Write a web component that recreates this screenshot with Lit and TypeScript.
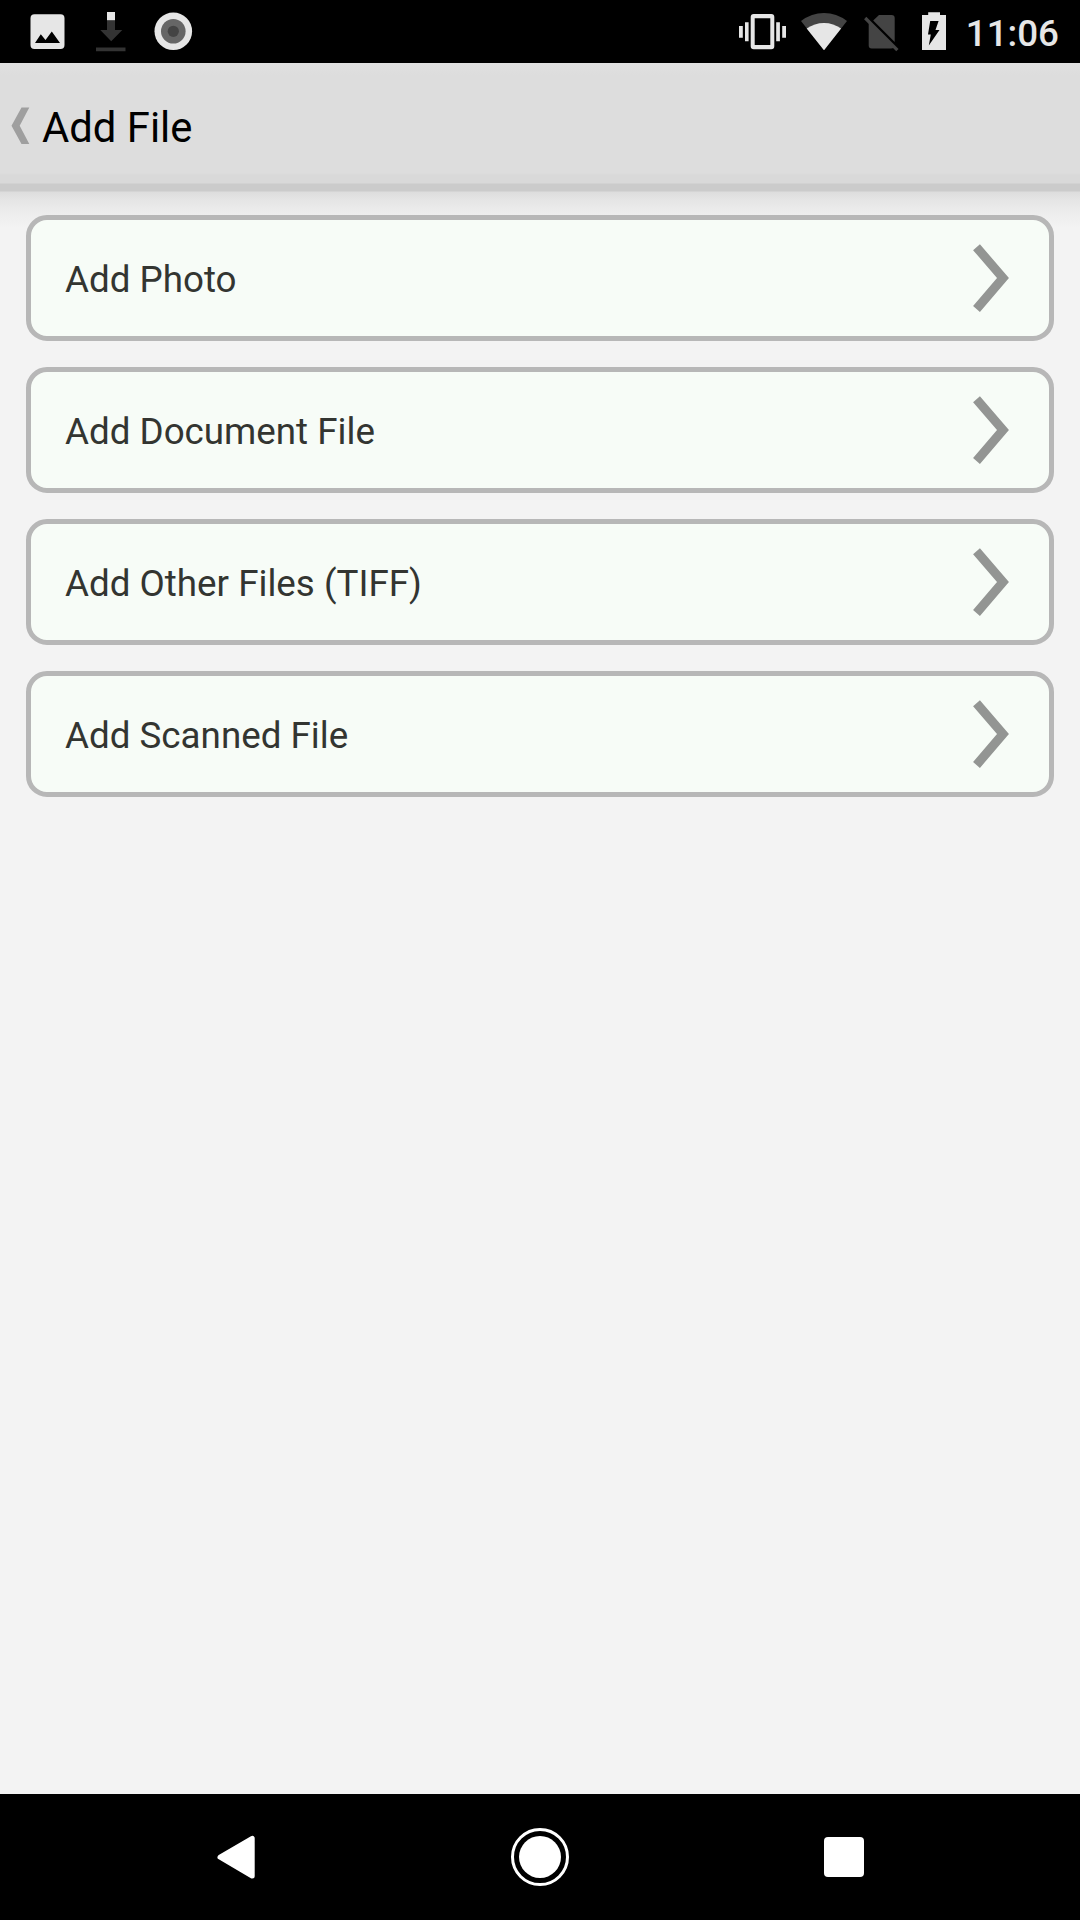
import { LitElement, html, css, svg } from "lit";
import { customElement, property } from "lit/decorators.js";

@customElement("status-bar")
class StatusBar extends LitElement {
  static styles = css`
    :host {
      display: flex;
      justify-content: space-between;
      height: 63px;
      background: #000;
      color: #e6e6e6;
    }
    .group {
      display: flex;
      align-items: stretch;
    }
    .left {
      padding-left: 28px;
      gap: 22px;
    }
    .right {
      padding-right: 21px;
      gap: 12px;
    }
    svg {
      display: block;
      flex: none;
    }
    .battery {
      margin-left: 4px;
    }
    .clock {
      font: 500 36.75px/67px Roboto, sans-serif;
      margin-left: 3px;
    }
  `;

  render() {
    return html`
      <div class="group left">
        <svg width="40" height="63" viewBox="28 0 40 63">
          <path
            fill="#e6e6e6"
            fill-rule="evenodd"
            d="M34.5 14.2H60.5Q64.5 14.2 64.5 18.2V45Q64.5 49 60.5 49H34.5Q30.5 49 30.5 45V18.2Q30.5 14.2 34.5 14.2ZM35 43H60L51.8 31.6L45.5 40L40.8 34.3Z"
          />
        </svg>
        <svg width="40" height="63" viewBox="90 0 40 63">
          <rect x="107" y="12" width="8" height="8.5" fill="#e6e6e6" />
          <path fill="#333" d="M107 20.5H115V30H122.3L111.2 41.3L100.3 30H107ZM96 47.5H125.5V51.3H96Z" />
        </svg>
        <svg width="42" height="63" viewBox="152 0 42 63">
          <circle cx="173.3" cy="31.3" r="18.8" fill="#e6e6e6" />
          <circle cx="173.3" cy="31.3" r="12.3" fill="#666" />
          <circle cx="173.3" cy="31.3" r="5.6" fill="#444" />
        </svg>
      </div>
      <div class="group right">
        <svg width="50" height="63" viewBox="737 0 50 63">
          <path
            fill="#e6e6e6"
            fill-rule="evenodd"
            d="M753.7 14H771.3Q774.3 14 774.3 17V46.2Q774.3 49.2 771.3 49.2H753.7Q750.7 49.2 750.7 46.2V17Q750.7 14 753.7 14ZM754.7 18.3V45H770.3V18.3ZM739 26H742.8V37.7H739ZM745 22.2H748.6V41.2H745ZM776.2 22.2H779.9V41.2H776.2ZM782.2 26H786V37.7H782.2Z"
          />
        </svg>
        <svg width="50" height="63" viewBox="799 0 50 63">
          <path fill="#444" d="M801 21Q811.5 13 824 13T847 21L824 50.3Z" />
          <path fill="#e6e6e6" d="M806.7 28.5Q814.5 22.9 824 22.9T841.1 28.5L824 50.3Z" />
        </svg>
        <svg width="40" height="63" viewBox="861 0 40 63">
          <path
            fill="#444"
            d="M873.2 20.4L879 15H891.6Q894.7 15 894.7 18V41.9ZM868.7 22L893.8 47.1Q893 48.6 891 48.6H871.7Q868.7 48.6 868.7 45.6Z"
          />
          <path stroke="#444" stroke-width="3.2" fill="none" d="M865.2 18L897.4 50.2" />
        </svg>
        <svg class="battery" width="34" height="63" viewBox="917 0 34 63">
          <path
            fill="#e6e6e6"
            fill-rule="evenodd"
            d="M928.2 12.2H940V15H946V50H922V15H928.2ZM930.2 21H938.6L935.5 30H939.5L928.8 45.5L930.8 34.5H928Z"
          />
        </svg>
        <span class="clock">11:06</span>
      </div>
    `;
  }
}

@customElement("title-bar")
class TitleBar extends LitElement {
  @property() heading = "";

  static styles = css`
    :host {
      display: flex;
      align-items: flex-start;
      box-sizing: border-box;
      height: 129px;
      background: linear-gradient(#e1e1e1 0, #dddddd 12px, #dddddd 110px, #d9d9d9 112px, #d9d9d9 120px, #cbcbcb 121px, #cbcbcb 128px, #dddddd 129px);
    }
    svg {
      display: block;
      width: 42px;
      height: 121px;
      flex: none;
    }
    .heading {
      font: 400 41.8px/130px Roboto, sans-serif;
      color: #000;
      white-space: nowrap;
    }
  `;

  render() {
    return html`
      <svg viewBox="0 63 42 121">
        <path fill="#9f9f9f" d="M21.5 107.5H29.3L19.7 125.7L29.3 144H21.5L11.5 125.7Z" />
      </svg>
      <span class="heading">${this.heading}</span>
    `;
  }
}

@customElement("option-card")
class OptionCard extends LitElement {
  @property() label = "";

  static styles = css`
    :host {
      display: flex;
      justify-content: space-between;
      align-items: center;
      box-sizing: border-box;
      height: 126px;
      padding: 0 39px 0 34px;
      border: 5px solid #b7b7b7;
      border-radius: 21px;
      background: #f7fcf7;
    }
    .label {
      padding-top: 4px;
      font: 400 36.75px/112px Roboto, sans-serif;
      color: #333531;
      white-space: nowrap;
    }
    svg {
      display: block;
      flex: none;
    }
  `;

  render() {
    return html`
      <div class="label">${this.label}</div>
      <svg width="38" height="116" viewBox="972 220 38 116">
        <path fill="none" stroke="#939593" stroke-width="9" d="M976.5 247.2L1003 278L976.5 309" />
      </svg>
    `;
  }
}

@customElement("nav-bar")
class NavBar extends LitElement {
  static styles = css`
    :host {
      display: flex;
      justify-content: center;
      gap: 204px;
      height: 126px;
      background: #000;
    }
    svg {
      display: block;
      width: 100px;
      height: 126px;
      flex: none;
    }
  `;

  render() {
    const icons = [
      svg`<path fill="#fff" stroke="#fff" stroke-width="5" stroke-linejoin="round" d="M220 1857.2L252.2 1838.3V1876Z" />`,
      svg`<circle cx="540" cy="1857" r="21" fill="#fff" /><circle cx="540" cy="1857" r="27.5" fill="none" stroke="#fff" stroke-width="3" />`,
      svg`<rect x="824" y="1837" width="40" height="40" rx="4" fill="#fff" />`,
    ];
    return icons.map(
      (icon, i) => html`<svg viewBox="${186 + i * 304} 1794 100 126">${icon}</svg>`
    );
  }
}

@customElement("app-root")
class AppRoot extends LitElement {
  static styles = css`
    :host {
      display: flex;
      flex-direction: column;
      height: 1920px;
      overflow: hidden;
    }
    .content {
      flex: 1;
      display: flex;
      flex-direction: column;
      gap: 26px;
      padding: 23px 26px 0;
      background: linear-gradient(#dddddd 0, #e5e5e5 8px, #ececec 19px, #f1f1f1 31px, #f3f3f3 36px);
    }
  `;

  render() {
    const options = ["Add Photo", "Add Document File", "Add Other Files (TIFF)", "Add Scanned File"];
    return html`
      <status-bar></status-bar>
      <title-bar heading="Add File"></title-bar>
      <main class="content">
        ${options.map((label) => html`<option-card label=${label}></option-card>`)}
      </main>
      <nav-bar></nav-bar>
    `;
  }
}
